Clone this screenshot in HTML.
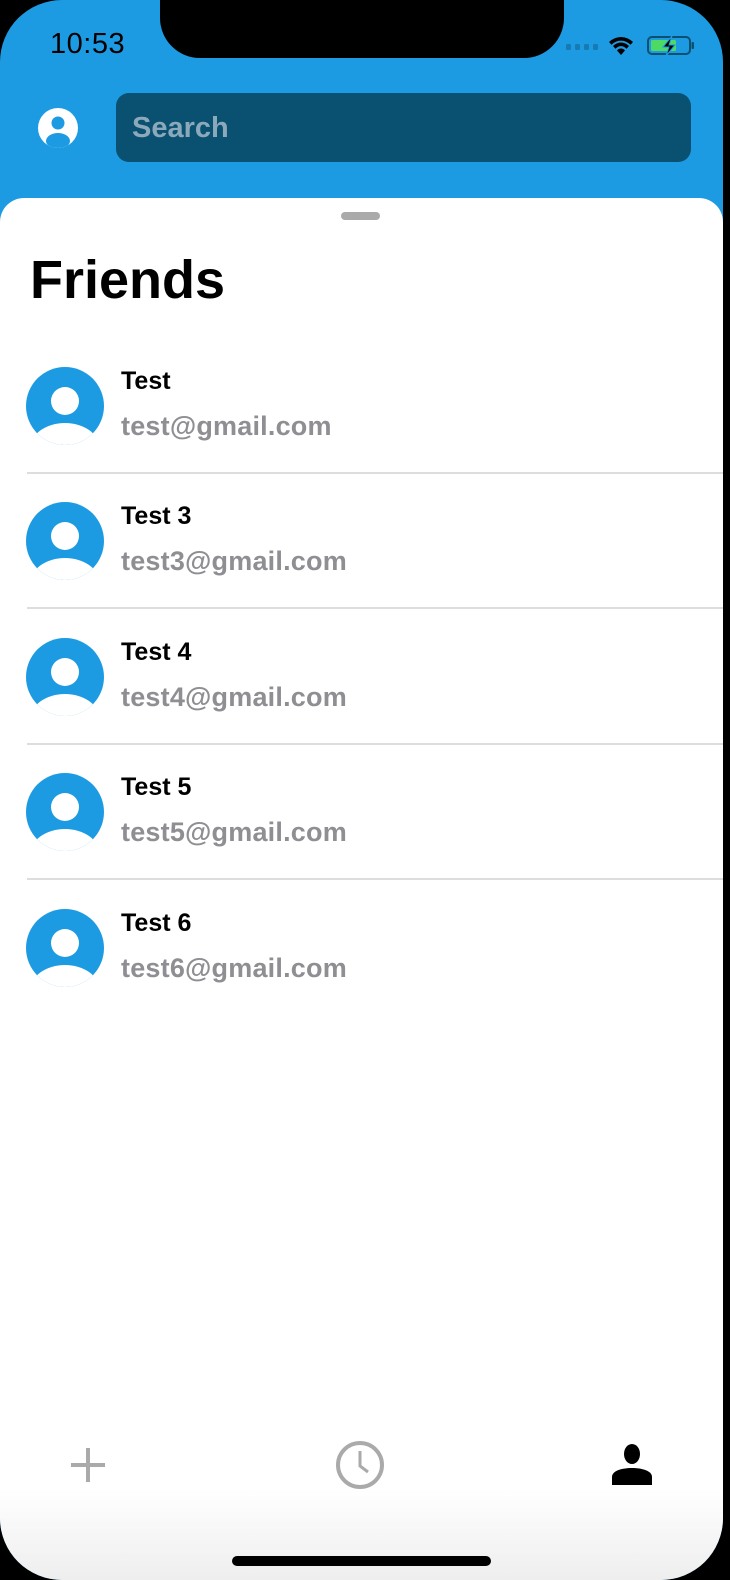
<!DOCTYPE html>
<html><head><meta charset="utf-8"><style>
*{margin:0;padding:0;box-sizing:border-box}
body{width:730px;height:1580px;background:#000;position:relative;overflow:hidden;font-family:"Liberation Sans",Arial,sans-serif}
.screen{position:absolute;left:0;top:0;width:723px;height:1580px;border-radius:62px;overflow:hidden;background:#1d9be2}
.notch{position:absolute;left:160px;top:-30px;width:404px;height:88px;background:#000;border-radius:0 0 40px 40px}
.time{position:absolute;left:50px;top:28px;font-size:29px;color:#000;letter-spacing:0.5px}
.sheet{position:absolute;left:0;top:198px;width:723px;height:1400px;background:linear-gradient(#fff 0,#fff 1290px,#eee 1382px);border-radius:24px 24px 0 0}
.grab{position:absolute;left:341px;top:212px;width:39px;height:8px;border-radius:4px;background:#aaa}
.search{position:absolute;left:116px;top:93px;width:575px;height:69px;background:#0a5070;border-radius:13px;color:#8ba9bb;font-size:29px;font-weight:bold;padding:19px 0 0 16px}
h1{position:absolute;left:30px;top:249px;font-size:54px;font-weight:bold;color:#000}
.row{position:absolute;left:0;width:723px;height:136px}
.row .av{position:absolute;left:26px;top:15px}
.row .n{position:absolute;left:121px;top:15px;font-size:25px;font-weight:bold;color:#000}
.row .e{position:absolute;left:121px;top:59px;font-size:27px;font-weight:bold;color:#8e8e93;letter-spacing:0.2px}
.row .d{position:absolute;left:27px;top:120px;right:0;height:1.5px;background:#ddd}
.home{position:absolute;left:232px;top:1556px;width:259px;height:10px;background:#000;border-radius:5px}
</style></head><body>
<div class="screen">
<div class="notch"></div>
<div class="time">10:53</div>
<svg style="position:absolute;left:566px;top:33px" width="130" height="24" viewBox="0 0 130 24">
<g fill="#167ab3"><rect x="0" y="11" width="5" height="6" rx="1.5"/><rect x="9" y="11" width="5" height="6" rx="1.5"/><rect x="18" y="11" width="5" height="6" rx="1.5"/><rect x="27" y="11" width="5" height="6" rx="1.5"/></g>
<path d="M43 9a17 17 0 0 1 24 0l-2.5 2.8a13 13 0 0 0-19 0z M47 13a11 11 0 0 1 16 0l-2.5 2.8a7 7 0 0 0-11 0z M51 17.5a5 5 0 0 1 8 0L55 22z" fill="#000"/>
<rect x="82" y="4" width="42" height="17" rx="4" fill="none" stroke="#0a5070" stroke-width="2"/>
<rect x="85" y="7" width="25" height="11" rx="1.5" fill="#4cd964"/>
<rect x="125.5" y="9" width="2.5" height="7" rx="1" fill="#0a5070"/>
<path d="M106 3l-9 11h6l-3 9 9-11h-6z" fill="#000" stroke="#1d9be2" stroke-width="1"/>
</svg>
<svg style="position:absolute;left:38px;top:108px" width="40" height="40" viewBox="0 0 40 40">
<defs><clipPath id="pc"><circle cx="20" cy="20" r="20"/></clipPath></defs>
<circle cx="20" cy="20" r="20" fill="#fff"/>
<g clip-path="url(#pc)" fill="#1d9be2"><circle cx="20" cy="15" r="6.5"/><ellipse cx="20" cy="33" rx="12" ry="8"/></g>
</svg>
<div class="search">Search</div>
<div class="sheet"></div>
<div class="grab"></div>
<h1>Friends</h1>

<div class="row" style="top:352px"><svg class="av" width="78" height="78" viewBox="0 0 78 78"><defs><clipPath id="c1"><circle cx="39" cy="39" r="39"/></clipPath></defs><circle cx="39" cy="39" r="39" fill="#1d9be2"/><g clip-path="url(#c1)" fill="#fff"><circle cx="39" cy="34" r="14"/><ellipse cx="39" cy="80" rx="34" ry="24"/></g></svg><div class="n">Test</div><div class="e">test@gmail.com</div><div class="d"></div></div>

<div class="row" style="top:487px"><svg class="av" width="78" height="78" viewBox="0 0 78 78"><defs><clipPath id="c2"><circle cx="39" cy="39" r="39"/></clipPath></defs><circle cx="39" cy="39" r="39" fill="#1d9be2"/><g clip-path="url(#c2)" fill="#fff"><circle cx="39" cy="34" r="14"/><ellipse cx="39" cy="80" rx="34" ry="24"/></g></svg><div class="n">Test 3</div><div class="e">test3@gmail.com</div><div class="d"></div></div>

<div class="row" style="top:623px"><svg class="av" width="78" height="78" viewBox="0 0 78 78"><defs><clipPath id="c3"><circle cx="39" cy="39" r="39"/></clipPath></defs><circle cx="39" cy="39" r="39" fill="#1d9be2"/><g clip-path="url(#c3)" fill="#fff"><circle cx="39" cy="34" r="14"/><ellipse cx="39" cy="80" rx="34" ry="24"/></g></svg><div class="n">Test 4</div><div class="e">test4@gmail.com</div><div class="d"></div></div>

<div class="row" style="top:758px"><svg class="av" width="78" height="78" viewBox="0 0 78 78"><defs><clipPath id="c4"><circle cx="39" cy="39" r="39"/></clipPath></defs><circle cx="39" cy="39" r="39" fill="#1d9be2"/><g clip-path="url(#c4)" fill="#fff"><circle cx="39" cy="34" r="14"/><ellipse cx="39" cy="80" rx="34" ry="24"/></g></svg><div class="n">Test 5</div><div class="e">test5@gmail.com</div><div class="d"></div></div>

<div class="row" style="top:894px"><svg class="av" width="78" height="78" viewBox="0 0 78 78"><defs><clipPath id="c5"><circle cx="39" cy="39" r="39"/></clipPath></defs><circle cx="39" cy="39" r="39" fill="#1d9be2"/><g clip-path="url(#c5)" fill="#fff"><circle cx="39" cy="34" r="14"/><ellipse cx="39" cy="80" rx="34" ry="24"/></g></svg><div class="n">Test 6</div><div class="e">test6@gmail.com</div></div>

<svg style="position:absolute;left:70px;top:1447px" width="36" height="36" viewBox="0 0 36 36"><path d="M18 1v34M1 18h34" stroke="#aaa" stroke-width="4"/></svg>
<svg style="position:absolute;left:334px;top:1439px" width="52" height="52" viewBox="0 0 52 52"><circle cx="26" cy="26" r="22" fill="none" stroke="#aaa" stroke-width="4"/><path d="M26 12v15l8 6" fill="none" stroke="#aaa" stroke-width="3"/></svg>
<svg style="position:absolute;left:611px;top:1443px" width="42" height="42" viewBox="0 0 42 42"><ellipse cx="21" cy="11" rx="8" ry="10" fill="#000"/><path d="M1 42v-8c0-6 9-9 20-9s20 3 20 9v8z" fill="#000"/></svg>
<div class="home"></div>
</div>
</body></html>
